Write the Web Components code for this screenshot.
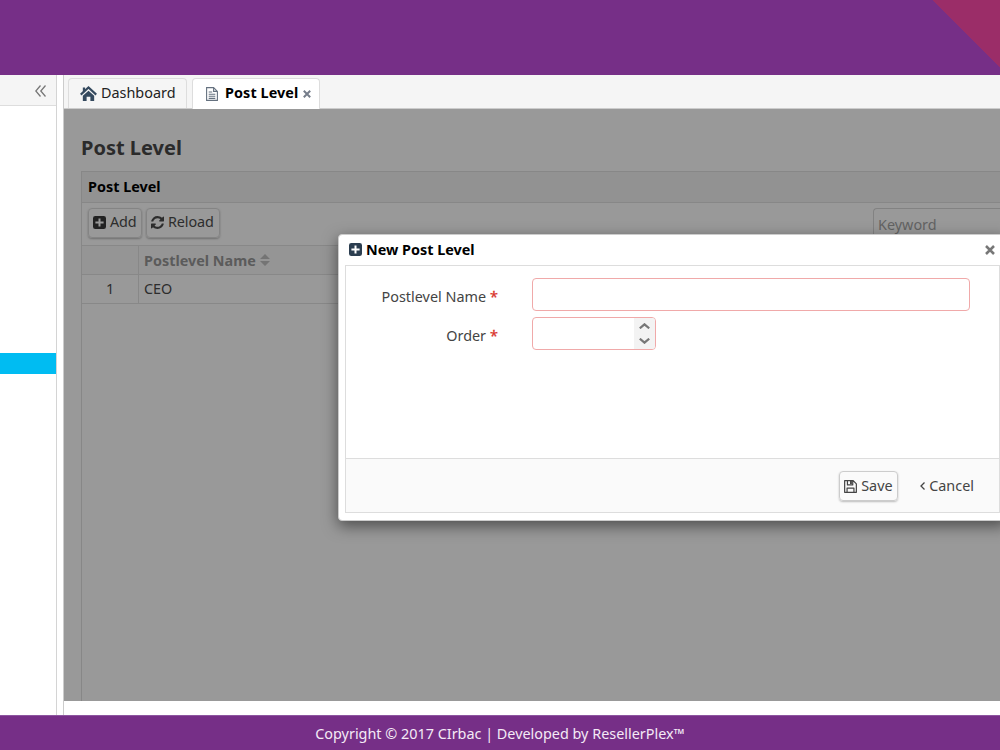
<!DOCTYPE html>
<html lang="en">
<head>
<meta charset="utf-8">
<title>Post Level</title>
<style>
html,body{margin:0;height:100%;overflow:hidden}
body{font:14.400px/20px "Noto Sans","Open Sans",sans-serif;color:#333}
</style>
</head>
<body>
<admin-app></admin-app>
<script>
const icons={
 home:['0 0 18 16','<path fill="none" stroke="currentColor" stroke-width="2.200" d="M.8 9.200 9 1.600l8.200 7.600"/><path fill="currentColor" d="M3 1.500h2.400v3L3 6.700zM9 5l6 5.300V16h-4v-4.500H7V16H3v-5.700z"/>'],
 doc:['0 0 12 14','<path fill="#fff" stroke="currentColor" stroke-width="1.1" d="M.6.6h7l3.8 3.8v9H.6zM7.6.6v3.8h3.8"/><path stroke="currentColor" stroke-width="1.1" d="M2.7 5h3.5M2.7 7.2h6.6M2.7 9.3h6.6M2.7 11.4h6.6"/>'],
 plus:['0 0 13 13','<path fill="currentColor" fill-rule="evenodd" d="M2.3 0h8.4Q13 0 13 2.3v8.4q0 2.3-2.3 2.3H2.3Q0 13 0 10.7V2.3Q0 0 2.3 0zM5.5 2.4v3.1H2.4v2h3.1v3.1h2V7.5h3.1v-2H7.5V2.4z"/>'],
 reload:['0 0 1536 1536','<path fill="currentColor" d="M1511 928q0 5-1 7-64 268-268 434.500T764 1536q-146 0-282.500-55T238 1324l-129 129q-19 19-45 19t-45-19-19-45V960q0-26 19-45t45-19h448q26 0 45 19t19 45-19 45l-137 137q71 66 161 102t187 36q134 0 250-65t186-179q11-17 53-117 8-23 30-23h192q13 0 22.500 9.500t9.500 22.500zM1536 128v448q0 26-19 45t-45 19h-448q-26 0-45-19t-19-45 19-45l138-138Q969 256 768 256q-134 0-250 65T332 500q-11 17-53 117-8 23-30 23H50q-13 0-22.500-9.500T18 608v-7q65-268 270-434.500T768 0q146 0 284 55.500T1297 212l130-129q19-19 45-19t45 19 19 45z"/>'],
 save:['0 0 14 14','<path fill="none" stroke="currentColor" stroke-width="1.3" stroke-linejoin="round" d="M.7.7h9.2l3.4 3.4v9.200H.7zM3.300 13V8.700h7.400V13M3.700.9v4.400h5.700V.9"/><path fill="currentColor" d="M6.500 1.200h2v3.200h-2z"/>'],
 close:['0 0 10 10','<path fill="none" stroke="currentColor" stroke-width="2.500" d="M1 1l8 8M9 1 1 9"/>'],
 left:['0 0 5 8','<path fill="none" stroke="currentColor" stroke-width="1.300" d="M4.500.5 1 4l3.500 3.500"/>'],
 collapse:['0 0 11 12','<path fill="none" stroke="currentColor" stroke-width="1.300" d="M5.500.5.800 6l4.700 5.500M10.500.5 5.800 6l4.700 5.500"/>'],
 sort:['0 0 10 12','<path fill="currentColor" d="M5 0l5 5H0zM0 7h10l-5 5z"/>'],
 up:['0 0 11 6','<path fill="none" stroke="currentColor" stroke-width="2.200" d="M.8 5.300 5.500 1.300l4.700 4"/>'],
 down:['0 0 11 6','<path fill="none" stroke="currentColor" stroke-width="2.200" d="M.8.7l4.700 4 4.700-4"/>']
};
function define(name,render){
 customElements.define(name,class extends HTMLElement{
  connectedCallback(){if(!this.shadowRoot)this.attachShadow({mode:'open'}).innerHTML=render(this)}
 });
}
define('ui-icon',e=>{
 const [box,body]=icons[e.getAttribute('name')];
 return `<style>:host{display:inline-block;flex:none}svg{display:block;width:100%;height:100%}</style><svg viewBox="${box}" preserveAspectRatio="none">${body}</svg>`});
define('ui-button',()=>`<style>
:host{display:flex;align-items:center;box-sizing:border-box;height:30px;padding:0 5px 1px;gap:4px;border:1px solid var(--edge,#848484);border-radius:4px;box-shadow:0 1px 2px var(--drop,#707070);white-space:nowrap}
:host([plain]){border-color:transparent;box-shadow:none}
</style><slot name="icon"></slot><slot></slot>`);
define('app-header',()=>`<style>
:host{display:block;height:75px;background:linear-gradient(to bottom left,#9b2d68 0 50%,transparent 50.500%) right top/67px 67px no-repeat,#762f87}
</style>`);
define('app-footer',()=>`<style>
:host{display:flex;height:35px;box-sizing:border-box;align-items:center;justify-content:center;background:#762f87;color:#f4eaf6;border-top:1px solid #8d55a0;font-size:14.400px;padding-top:1px}
</style><slot></slot>`);
define('side-bar',()=>`<style>
:host{display:flex;flex-direction:column;width:56px;border-right:1px solid #d4d4d4;background:#fff}
header{height:29px;padding-top:1px;background:#f5f5f5;border-bottom:1px solid #ddd;display:flex;justify-content:flex-end;align-items:center;color:#777}
ui-icon{width:11px;height:12px;margin:0 10px 0 0}
.active{height:21px;margin-top:247px;background:#00bcf2}
</style><header><ui-icon name="collapse"></ui-icon></header><div class="active"></div>`);
define('page-tab',()=>`<style>
:host{display:flex;box-sizing:border-box;height:30px;padding-bottom:1px;align-items:center;border:1px solid #ddd;border-bottom:0;border-radius:4px 4px 0 0;background:#f5f5f5;color:#222;white-space:nowrap}
:host([active]){background:#fff;font-weight:700;color:#000;height:31px;padding-bottom:2px}
</style><slot></slot>`);
define('tab-bar',()=>`<style>
:host{display:flex;height:34px;box-sizing:border-box;align-items:flex-start;gap:5px;padding:3px 0 0 4px;background:#f5f5f5;border-bottom:1px solid #ccc}
.home{width:17px;height:15px;color:#34495e;margin:1px 4px 0 11px}
.doc{width:12px;height:14px;color:#65717f;margin:1px 7px 0 13px}
.x{width:8px;height:8px;color:#757d8a;margin:1px 0 0 5px}
.first{width:119px}
.second{width:128px;letter-spacing:.08px}
</style><page-tab class="first"><ui-icon class="home" name="home"></ui-icon><span>Dashboard</span></page-tab><page-tab class="second" active><ui-icon class="doc" name="doc"></ui-icon><span>Post Level</span><ui-icon class="x" name="close"></ui-icon></page-tab>`);
define('data-panel',()=>`<style>
:host{display:flex;flex-direction:column;border:1px solid #878787;border-width:1px 0 0 1px;flex:1;color:#2d2d2d}
h2{margin:0;height:30px;background:#929292;border-bottom:1px solid #878787;font-size:14.400px;line-height:30px;padding-left:6px;color:#000}
.tools{display:flex;height:43px;box-sizing:border-box;padding:5px 0 0 6px;gap:4px;border-bottom:1px solid #888}
ui-button{padding-left:4px;padding-bottom:2px;letter-spacing:-.1px}
.plus{width:13px;height:13px;color:#222}.re{width:13px;height:13px}
.search{margin:0 0 0 auto;width:127px;height:32px;box-sizing:border-box;border:1px solid #828282;border-right:0;border-radius:4px 0 0 4px;padding:6px 4px;color:#636363}
.row{display:grid;grid-template-columns:57px 1fr;height:28px;border-bottom:1px solid #888;line-height:27px}
.row>*{padding-left:5px}.row>:first-child{border-right:1px solid #888;padding:0;text-align:center}
.head{background:#959595;color:#5b5b5b;font-weight:700}
.head span{display:flex;align-items:center;gap:4px}
.sort{width:10px;height:12px;color:#747474}
</style><h2>Post Level</h2><div class="tools"><ui-button style="width:54px"><ui-icon slot="icon" class="plus" name="plus"></ui-icon>Add</ui-button><ui-button style="width:74px"><ui-icon slot="icon" class="re" name="reload"></ui-icon>Reload</ui-button><div class="search">Keyword</div></div>
<div class="row head"><span></span><span>Postlevel Name<ui-icon class="sort" name="sort"></ui-icon></span></div><div class="row"><span>1</span><span>CEO</span></div>`);
define('page-content',()=>`<style>
:host{display:flex;flex-direction:column;height:592px;box-sizing:border-box;background:#999;padding:25px 0 0 17px}
h1{margin:0;height:37px;font-size:20px;line-height:28px;color:#2b2b2b}
</style><h1>Post Level</h1><data-panel></data-panel>`);
define('form-row',e=>`<style>
:host{display:flex;align-items:center;height:33px;color:#444}
label{width:152px;text-align:right;margin-right:35px;padding-top:5px}b{font-weight:400;color:#d9342b;margin-left:4px;-webkit-text-stroke:.3px}
</style><label>${e.getAttribute('label')}<b>*</b></label><slot></slot>`);
define('text-box',()=>`<style>:host{display:block;box-sizing:border-box;width:438px;height:33px;border:1px solid #f0a9a9;border-radius:4px;background:#fff;margin-left:-1px}</style>`);
define('number-box',()=>`<style>:host{display:flex;justify-content:flex-end;box-sizing:border-box;width:124px;height:33px;border:1px solid #f0a9a9;border-radius:4px;overflow:hidden;background:#fff;margin-left:-1px}
div{width:21px;background:#f3f3f3;display:flex;flex-direction:column;align-items:center;justify-content:center;gap:9px;color:#777}ui-icon{width:11px;height:6px}</style><div><ui-icon name="up"></ui-icon><ui-icon name="down"></ui-icon></div>`);
define('modal-dialog',()=>`<style>
:host{display:flex;flex-direction:column;position:absolute;left:338px;top:234px;width:669px;height:287px;box-sizing:border-box;background:#fff;border:1px solid #ccc;border-radius:4px;box-shadow:0 5px 15px rgba(0,0,0,.5);padding:0 6px 7px}
header{display:flex;align-items:center;height:30px;font-size:14.400px;font-weight:700;color:#000;padding-left:4px;gap:4px}
.plus{width:13px;height:13px;color:#2c3e50;margin-top:-1px}.x{width:10px;height:10px;color:#777;margin:0 5px 1px auto}
section{flex:1;display:flex;flex-direction:column;border:1px solid #ddd}
.form{flex:1;display:flex;flex-direction:column;gap:6px;padding-top:12px}
footer{height:54px;box-sizing:border-box;border-top:1px solid #ddd;background:#fafafa;display:flex;padding:12px 19px 0 0;justify-content:flex-end;gap:16px;color:#444}
ui-button{--edge:#ccc;--drop:#bbb;padding-bottom:0}.save{width:13px;height:13px}.left{width:5px;height:8px}
</style><header><ui-icon class="plus" name="plus"></ui-icon><span>New Post Level</span><ui-icon class="x" name="close"></ui-icon></header>
<section><div class="form"><form-row label="Postlevel Name"><text-box></text-box></form-row><form-row label="Order"><number-box></number-box></form-row></div>
<footer><ui-button style="width:59px;padding-left:4px"><ui-icon slot="icon" class="save" name="save"></ui-icon>Save</ui-button><ui-button plain><ui-icon slot="icon" class="left" name="left"></ui-icon>Cancel</ui-button></footer></section>`);
define('admin-app',()=>`<style>
:host{display:grid;grid-template-rows:75px 640px 35px;height:750px;position:relative;overflow:hidden;background:#fff}
.body{display:grid;grid-template-columns:57px 1fr;gap:6px}
main{border-left:1px solid #ccc;min-width:0}
</style><app-header></app-header><div class="body"><side-bar></side-bar><main><tab-bar></tab-bar><page-content></page-content></main></div><app-footer>Copyright © 2017 CIrbac | Developed by ResellerPlex™</app-footer><modal-dialog></modal-dialog>`);
</script>
</body>
</html>
